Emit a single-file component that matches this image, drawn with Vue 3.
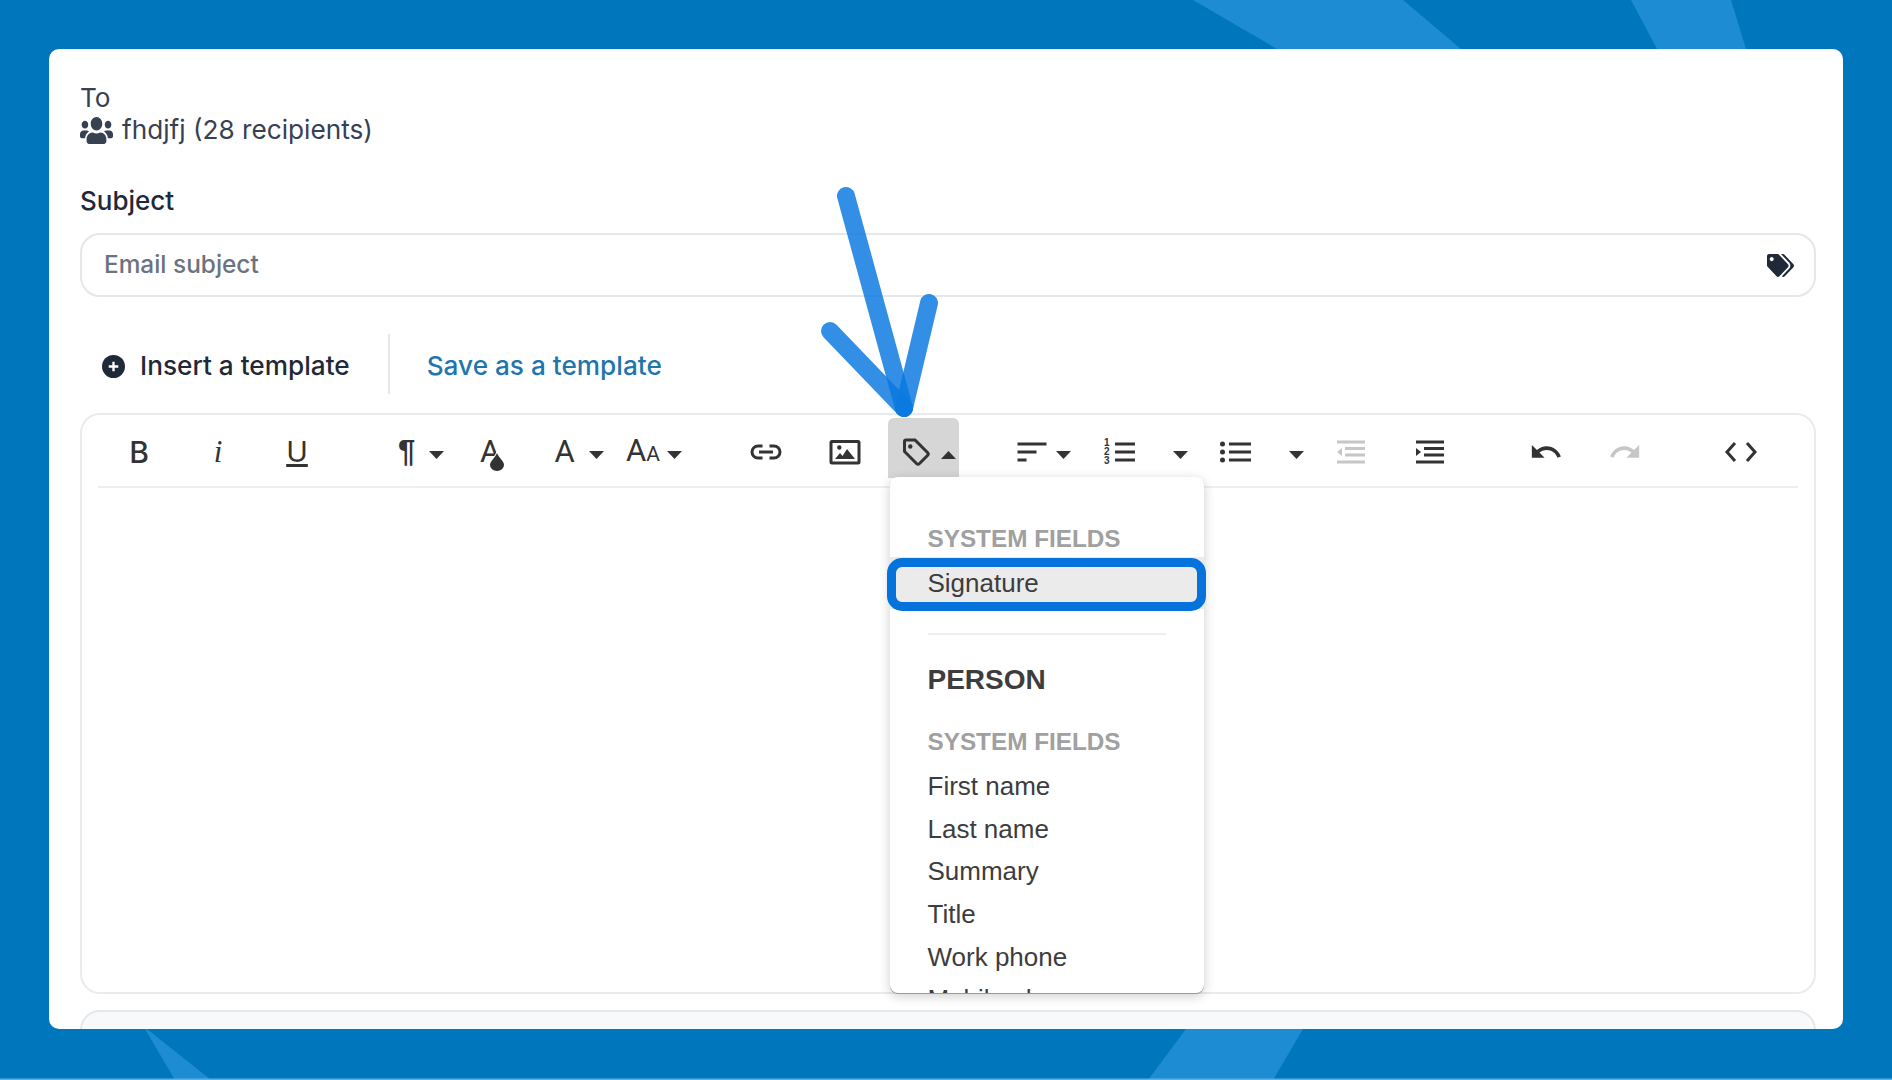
<template>
  <div class="page">
    <svg class="bands" viewBox="0 0 1892 1080">
      <path d="M1193 0H1403L1461 49H1277Z" />
      <path d="M1631 0H1731L1746 49H1657Z" />
      <path d="M145 1029H147L211 1080H175Z" />
      <path d="M1186 1029H1303L1273 1080H1148Z" />
      <rect class="edge" x="0" y="1078.500" width="1892" height="1.500" />
    </svg>

    <div class="card">
      <div class="to">To</div>
      <div class="recipients">
        <svg class="users" viewBox="0 32 640 448" preserveAspectRatio="none"><path :d="usersPath" /></svg>
        <span>fhdjfj (28 recipients)</span>
      </div>

      <label class="subject-label">Subject</label>
      <div class="subject-input">
        <span class="placeholder">Email subject</span>
        <svg class="tags" viewBox="0 0 640 512" preserveAspectRatio="none"><path :d="tagsPath" /></svg>
      </div>

      <div class="template-row">
        <a class="insert">
          <svg class="plus" viewBox="0 0 24 24">
            <circle cx="12" cy="12" r="12" />
            <path d="M12 7v10M7 12h10" />
          </svg>
          Insert a template
        </a>
        <span class="sep"></span>
        <a class="save">Save as a template</a>
      </div>

      <div class="editor">
        <div class="toolbar">
          <div
            v-for="t in tools"
            :key="t.name"
            class="tool"
            :class="{ active: t.menu, muted: t.muted }"
            :style="{ width: t.w + 'px', marginLeft: (t.ml || 0) + 'px', gap: (t.gap || 0) + 'px' }"
          >
            <span v-if="t.text" class="glyph" :class="t.cls">{{ t.text }}<small v-if="t.small">{{ t.small }}</small><svg v-if="t.drop" class="drop" viewBox="0 0 14 18"><path d="M7 0C9 5 14 8 14 12a7 6 0 0 1-14 0C0 8 5 5 7 0Z" /></svg></span>
            <svg v-if="t.stroke || t.fill" class="ico" :viewBox="t.vb || '0 0 34 34'">
              <path v-if="t.stroke" class="s" :d="t.stroke" />
              <path v-if="t.fill" class="f" :d="t.fill" />
              <template v-if="t.digits">
                <text x="1" y="11" class="digit">1</text>
                <text x="1" y="20" class="digit">2</text>
                <text x="1" y="29" class="digit">3</text>
              </template>
            </svg>
            <svg v-if="t.caret" class="caret" :class="{ up: t.menu }" viewBox="0 0 15 8"><path d="M0 0H15L7.5 8Z" /></svg>

            <template v-if="t.menu">
              <div class="menu">
                <div class="menu-head">SYSTEM FIELDS</div>
                <div class="menu-row selected">Signature</div>
                <div class="menu-div"></div>
                <div class="menu-title">PERSON</div>
                <div class="menu-head second">SYSTEM FIELDS</div>
                <div class="menu-list">
                  <div v-for="f in personFields" :key="f" class="menu-row">{{ f }}</div>
                </div>
              </div>
              <div class="ring"></div>
            </template>
          </div>
        </div>
      </div>

      <div class="next-panel"></div>
    </div>

    <svg class="arrow" viewBox="0 0 1892 1080">
      <path d="M846 196L904 408" />
      <path d="M929 303L904 408" />
      <path d="M830 331L904 408" />
    </svg>
  </div>
</template>

<script setup>
const usersPath = 'M96 224c35.3 0 64-28.7 64-64s-28.7-64-64-64-64 28.7-64 64 28.7 64 64 64zm448 0c35.3 0 64-28.7 64-64s-28.7-64-64-64-64 28.7-64 64 28.7 64 64 64zm32 32h-64c-17.6 0-33.5 7.1-45.1 18.6 40.3 22.1 68.9 62 75.1 109.4h66c17.7 0 32-14.3 32-32v-32c0-35.3-28.7-64-64-64zm-256 0c61.9 0 112-50.1 112-112S381.9 32 320 32 208 82.1 208 144s50.1 112 112 112zm76.8 32h-8.3c-20.8 10-43.9 16-68.5 16s-47.6-6-68.5-16h-8.3C179.6 288 128 339.6 128 403.2V432c0 26.5 21.5 48 48 48h288c26.5 0 48-21.5 48-48v-28.8c0-63.6-51.6-115.2-115.2-115.2zm-223.7-13.4C161.5 263.1 145.6 256 128 256H64c-35.3 0-64 28.7-64 64v32c0 17.7 14.3 32 32 32h65.9c6.3-47.4 34.9-87.3 75.2-109.4z'
const tagsPath = 'M497.941 225.941L286.059 14.059A48 48 0 0 0 252.118 0H48C21.49 0 0 21.49 0 48v204.118a48 48 0 0 0 14.059 33.941l211.882 211.882c18.744 18.745 49.136 18.746 67.882 0l204.118-204.118c18.745-18.745 18.745-49.137 0-67.882zM112 160c-26.51 0-48-21.49-48-48s21.49-48 48-48 48 21.49 48 48-21.49 48-48 48zm513.941 133.823L421.823 497.941c-18.745 18.745-49.137 18.745-67.882 0l-.36-.36L527.64 323.522c16.999-16.999 26.36-39.6 26.36-63.64s-9.362-46.641-26.36-63.64L331.397 0h48.721a48 48 0 0 1 33.941 14.059l211.882 211.882c18.745 18.745 18.745 49.137 0 67.882z'

const personFields = ['First name', 'Last name', 'Summary', 'Title', 'Work phone', 'Mobile phone']

const tools = [
  { name: 'bold', w: 79, text: 'B', cls: 'b' },
  { name: 'italic', w: 79, text: 'i', cls: 'i' },
  { name: 'underline', w: 79, text: 'U', cls: 'u' },
  { name: 'paragraph', w: 59, ml: 55, text: '¶', cls: 'para', caret: true, gap: 14 },
  { name: 'color', w: 79, text: 'A', cls: 'fill', drop: true },
  { name: 'font', w: 87, ml: 6, text: 'A', cls: 'a', caret: true, gap: 14 },
  { name: 'size', w: 63, text: 'A', small: 'A', cls: 'a', caret: true, gap: 7 },
  {
    name: 'link', w: 79, ml: 41,
    stroke: 'M13.5 11H9a6 6 0 0 0 0 12h4.5M20.5 11H25a6 6 0 0 1 0 12h-4.500M10 17h14',
  },
  {
    name: 'image', w: 79,
    stroke: 'M4 6.500H30Q31 6.500 31 7.500V27Q31 28 30 28H4Q3 28 3 27V7.500Q3 6.500 4 6.500Z',
    fill: 'M13.500 12.500a2.200 2.200 0 1 1-4.400 0a2.200 2.200 0 1 1 4.400 0ZM7 24l5-6 2.500 3 4.500-7 8 10Z',
  },
  {
    name: 'tag', w: 71, ml: 3.5, menu: true, caret: true, gap: 8,
    stroke: 'M5.500 6.500Q5.500 5 7 5H16L28.500 17.500Q30 19 28.500 20.500L20.500 28.500Q19 30 17.500 28.500L5.500 16.500Z',
    fill: 'M13.500 11.500a2.200 2.200 0 1 1-4.400 0a2.200 2.200 0 1 1 4.400 0Z',
  },
  { name: 'align', w: 60, ml: 54, caret: true, gap: 7, stroke: 'M2.500 9H31.500M2.500 17H21.500M2.500 25H11.500' },
  { name: 'ol', w: 100, ml: 22.500, caret: true, gap: 36, digits: true, stroke: 'M12 9H32M12 17H32M12 25H32' },
  {
    name: 'ul', w: 100, ml: 16, caret: true, gap: 36,
    stroke: 'M10 9H32M10 17H32M10 25H32',
    fill: 'M6 9a2.500 2.500 0 1 1-5 0a2.500 2.500 0 1 1 5 0ZM6 17a2.500 2.500 0 1 1-5 0a2.500 2.500 0 1 1 5 0ZM6 25a2.500 2.500 0 1 1-5 0a2.500 2.500 0 1 1 5 0Z',
  },
  {
    name: 'outdent', w: 56, ml: 11.500, muted: true,
    stroke: 'M3 7H31M11 13.500H31M11 20H31M3 27H31',
    fill: 'M8 13V21L3 17Z',
  },
  {
    name: 'indent', w: 79, ml: 11.500,
    stroke: 'M3 7H31M11 13.500H31M11 20H31M3 27H31',
    fill: 'M3 13V21L8 17Z',
  },
  {
    name: 'undo', w: 79, ml: 37, vb: '0 0 24 24',
    fill: 'M12.500 8c-2.650 0-5.050.990-6.900 2.600L2 7v9h9l-3.620-3.620c1.390-1.160 3.160-1.880 5.120-1.880 3.540 0 6.550 2.310 7.600 5.500l2.370-.780C21.080 11.030 17.150 8 12.500 8z',
  },
  {
    name: 'redo', w: 79, muted: true, vb: '0 0 24 24',
    fill: 'M18.400 10.600C16.550 8.990 14.150 8 11.500 8c-4.650 0-8.580 3.030-9.960 7.220L3.900 16c1.050-3.190 4.050-5.500 7.600-5.500 1.950 0 3.730.720 5.120 1.880L13 16h9V7l-3.600 3.600z',
  },
  { name: 'code', w: 79, ml: 37, stroke: 'M11 8L3 17L11 26M23 8L31 17L23 26' },
]
</script>

<style>
html,
body {
  margin: 0;
  background: #0076bd;
}
</style>

<style scoped>
.page {
  position: relative;
  box-sizing: border-box;
  width: 1892px;
  height: 1080px;
  padding: 49px;
  overflow: hidden;
  background: #0076bd;
  font-family: Inter, "Liberation Sans", sans-serif;
}

.bands {
  position: absolute;
  inset: 0;
}

.bands path {
  fill: #1e8cd2;
}

.bands .edge {
  fill: #5fb0e0;
}

.card {
  position: relative;
  box-sizing: border-box;
  height: 980px;
  padding: 33px 27px 0 31px;
  overflow: hidden;
  background: #fff;
  border-radius: 10px;
  font-size: 26.200px;
  line-height: 32px;
  color: #374151;
}

.recipients {
  display: flex;
  align-items: center;
  gap: 9px;
}

.users {
  width: 33px;
  height: 27px;
  fill: #374151;
}

.subject-label {
  display: block;
  margin-top: 39px;
  font-size: 26px;
  font-weight: 500;
  color: #1f2937;
}

.subject-input {
  display: flex;
  align-items: center;
  justify-content: space-between;
  box-sizing: border-box;
  height: 64px;
  margin-top: 16px;
  padding: 0 20px 0 22px;
  border: 2px solid #e5e7eb;
  border-radius: 20px;
  font-size: 24.400px;
  font-weight: 500;
  color: #6b7280;
}

.placeholder {
  margin-bottom: 2px;
}

.tags {
  width: 27px;
  height: 23px;
  fill: #1f2937;
}

.template-row {
  display: flex;
  align-items: center;
  height: 60px;
  margin-top: 37px;
  padding-left: 22px;
  font-weight: 500;
}

.insert {
  display: flex;
  align-items: center;
  gap: 15px;
  margin-top: 4px;
  color: #1f2937;
}

.plus {
  width: 23px;
  height: 23px;
}

.plus circle {
  fill: #1f2937;
}

.plus path {
  fill: none;
  stroke: #fff;
  stroke-width: 2.400;
}

.sep {
  align-self: stretch;
  width: 2px;
  margin: 0 37px 0 38px;
  background: #e5e7eb;
}

.save {
  margin-top: 4px;
  color: #1f76ad;
}

.editor {
  box-sizing: border-box;
  height: 581px;
  margin-top: 19px;
  border: 2px solid #e9ecef;
  border-radius: 20px;
}

.toolbar {
  display: flex;
  box-sizing: border-box;
  height: 73px;
  margin: 0 16px;
  padding: 3px 0 0 1.500px;
  border-bottom: 2px solid #eeeff1;
}

.tool {
  position: relative;
  display: flex;
  align-items: center;
  justify-content: center;
  flex: none;
  box-sizing: border-box;
  height: 60px;
  padding-top: 8px;
  color: #333;
}

.tool.active {
  justify-content: flex-start;
  padding-left: 11px;
  background: #d6d6d6;
  border-radius: 6px 6px 0 0;
}

.ico {
  flex: none;
  width: 34px;
  height: 34px;
}

.ico .s {
  fill: none;
  stroke: #333;
  stroke-width: 3;
}

.ico .f {
  fill: #333;
}

.digit {
  font-family: "Liberation Sans", sans-serif;
  font-size: 10px;
  font-weight: 700;
  fill: #333;
}

.muted .s {
  stroke: #c6c6c6;
}

.muted .f {
  fill: #c6c6c6;
}

.caret {
  flex: none;
  width: 15px;
  height: 8px;
  margin-top: 6px;
  fill: #333;
}

.caret.up {
  transform: rotate(180deg);
}

.glyph {
  position: relative;
  font-family: Roboto, sans-serif;
  font-size: 31px;
  line-height: 34px;
}

.glyph small {
  font-size: 21px;
}

.glyph.b {
  font-family: Inter, sans-serif;
  font-weight: 500;
  font-size: 30px;
}

.glyph.i {
  font-family: "Liberation Serif", serif;
  font-style: italic;
  font-size: 31px;
}

.glyph.u {
  font-family: Inter, sans-serif;
  font-size: 29px;
  text-decoration: underline;
  text-decoration-thickness: 3px;
  text-underline-offset: 2px;
}

.glyph.para {
  font-family: "Liberation Sans", sans-serif;
  font-weight: 700;
  font-size: 31px;
}

.drop {
  position: absolute;
  top: 18px;
  left: 10px;
  width: 14px;
  height: 18px;
  overflow: visible;
  fill: #333;
  stroke: #fff;
  stroke-width: 2;
  paint-order: stroke;
}

.menu {
  position: absolute;
  top: 59px;
  left: 2px;
  z-index: 2;
  box-sizing: border-box;
  width: 314px;
  height: 516px;
  padding-top: 44px;
  overflow: hidden;
  background: #fff;
  border-radius: 8px;
  box-shadow: 0 1px 0 #9a9a9a, 0 3px 12px rgba(0, 0, 0, 0.2);
  font-family: "Liberation Sans", Arial, sans-serif;
  font-size: 26px;
  color: #3d3d3d;
}

.menu-head {
  padding-left: 37.500px;
  font-size: 24.300px;
  font-weight: 700;
  line-height: 36px;
  color: #a0a0a0;
}

.menu-head.second {
  margin-top: 24px;
}

.menu-row {
  height: 42.700px;
  padding-left: 37.500px;
  line-height: 42.700px;
}

.menu-row.selected {
  height: 52px;
  line-height: 52px;
  background: #ebebeb;
}

.menu-div {
  height: 2px;
  margin: 24px 38px 0;
  background: #eee;
}

.menu-title {
  margin-top: 25px;
  padding-left: 37.500px;
  font-size: 28px;
  font-weight: 700;
  line-height: 40px;
}

.menu-list {
  margin-top: 5px;
}

.ring {
  position: absolute;
  top: 140px;
  left: -1px;
  z-index: 3;
  box-sizing: border-box;
  width: 319px;
  height: 53px;
  border: 9px solid #0672dc;
  border-radius: 15px;
}

.next-panel {
  box-sizing: border-box;
  height: 60px;
  margin-top: 16px;
  background: #f8f9fb;
  border: 2px solid #e5e7eb;
  border-radius: 20px;
}

.arrow {
  position: absolute;
  inset: 0;
  z-index: 5;
  pointer-events: none;
}

.arrow path {
  fill: none;
  stroke: #0a78e0;
  stroke-width: 18;
  stroke-linecap: round;
  opacity: 0.83;
}
</style>
